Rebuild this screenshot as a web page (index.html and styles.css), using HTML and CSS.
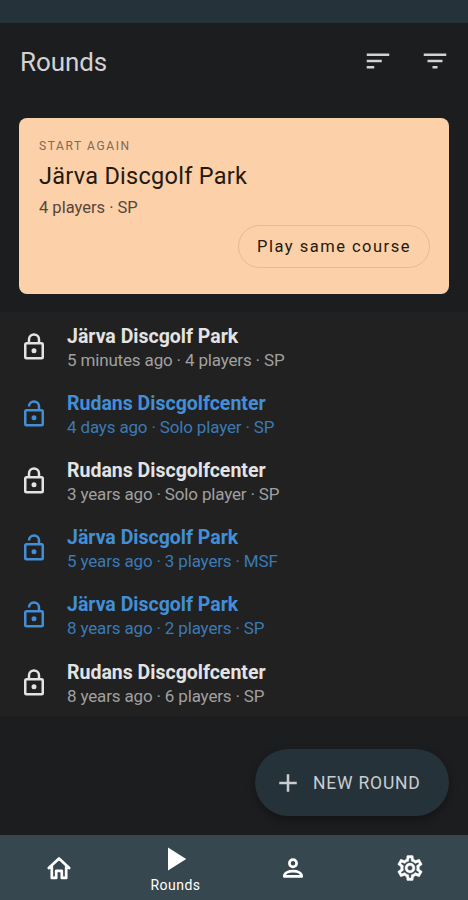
FILE: index.html
```html
<!DOCTYPE html>
<html lang="en">
<head>
<meta charset="utf-8">
<title>Rounds</title>
<link rel="stylesheet" href="styles.css">
</head>
<body>
<svg class="defs" aria-hidden="true">
  <symbol id="locked" viewBox="0 0 24 24"><path d="M12 17a2 2 0 1 1 0-4 2 2 0 0 1 0 4m6 3V10H6v10h12m0-12a2 2 0 0 1 2 2v10a2 2 0 0 1-2 2H6a2 2 0 0 1-2-2V10c0-1.1.9-2 2-2h1V6a5 5 0 0 1 10 0v2h1m-6-5a3 3 0 0 0-3 3v2h6V6a3 3 0 0 0-3-3z"/></symbol>
  <symbol id="unlocked" viewBox="0 0 24 24"><path d="M12 17a2 2 0 1 1 0-4 2 2 0 0 1 0 4m6 3V10H6v10h12m0-12a2 2 0 0 1 2 2v10a2 2 0 0 1-2 2H6a2 2 0 0 1-2-2V10c0-1.1.9-2 2-2h9V6a3 3 0 0 0-6 0H7a5 5 0 0 1 10 0v2h1z"/></symbol>
</svg>
<div class="status"></div>
<header class="top">
  <h1>Rounds</h1>
  <svg class="icon" viewBox="0 0 24 24"><path d="M3 18h6v-2H3v2zM3 6v2h18V6H3zm0 7h12v-2H3v2z"/></svg>
  <svg class="icon" viewBox="0 0 24 24"><path d="M10 18h4v-2h-4v2zM3 6v2h18V6H3zm3 7h12v-2H6v2z"/></svg>
</header>
<section class="card">
  <div class="overline">START AGAIN</div>
  <h2>Järva Discgolf Park</h2>
  <p>4 players · SP</p>
  <button class="again">Play same course</button>
</section>
<ul class="rounds">
  <li><svg class="icon"><use href="#locked"/></svg><div><b>Järva Discgolf Park</b><span>5 minutes ago · 4 players · SP</span></div></li>
  <li class="open"><svg class="icon"><use href="#unlocked"/></svg><div><b>Rudans Discgolfcenter</b><span>4 days ago · Solo player · SP</span></div></li>
  <li><svg class="icon"><use href="#locked"/></svg><div><b>Rudans Discgolfcenter</b><span>3 years ago · Solo player · SP</span></div></li>
  <li class="open"><svg class="icon"><use href="#unlocked"/></svg><div><b>Järva Discgolf Park</b><span>5 years ago · 3 players · MSF</span></div></li>
  <li class="open"><svg class="icon"><use href="#unlocked"/></svg><div><b>Järva Discgolf Park</b><span>8 years ago · 2 players · SP</span></div></li>
  <li><svg class="icon"><use href="#locked"/></svg><div><b>Rudans Discgolfcenter</b><span>8 years ago · 6 players · SP</span></div></li>
</ul>
<div class="actions">
  <button class="new"><svg class="icon" viewBox="0 0 24 24"><path d="M19 13h-6v6h-2v-6H5v-2h6V5h2v6h6v2z"/></svg><span>NEW ROUND</span></button>
</div>
<nav class="tabs">
  <a><svg class="tab-icon" viewBox="0 0 28 28"><path class="line" d="M3.8 14 14 4.4 24.2 14M6.8 12.5v11.4h4.4v-7h5.6v7h4.4V12.5"/></svg></a>
  <a class="current"><svg class="tab-icon" viewBox="0 0 28 28"><path d="M6 2.5v23L24.2 14z"/></svg><span>Rounds</span></a>
  <a><svg class="tab-icon" viewBox="0 0 28 28"><circle class="line" cx="14" cy="9.2" r="3.6"/><path class="line" d="M5.3 22.4c0-7 17.4-7 17.4 0z"/></svg></a>
  <a><svg class="icon gear" viewBox="0 0 24 24"><path d="M12 8a4 4 0 1 1 0 8 4 4 0 0 1 0-8m0 2a2 2 0 1 0 0 4 2 2 0 0 0 0-4m-2 12c-.25 0-.46-.18-.5-.42l-.37-2.65c-.63-.25-1.17-.59-1.69-.99l-2.49 1.01c-.22.08-.49 0-.61-.22l-2-3.46a.493.493 0 0 1 .12-.64l2.11-1.66L4.5 12l.07-1-2.11-1.63a.493.493 0 0 1-.12-.64l2-3.46c.12-.22.39-.31.61-.22l2.49 1c.52-.39 1.06-.73 1.69-.98l.37-2.65c.04-.24.25-.42.5-.42h4c.25 0 .46.18.5.42l.37 2.65c.63.25 1.17.59 1.69.98l2.49-1c.22-.09.49 0 .61.22l2 3.46c.13.22.07.49-.12.64L19.43 11l.07 1-.07 1 2.11 1.63c.19.15.25.42.12.64l-2 3.46c-.12.22-.39.31-.61.22l-2.49-1c-.52.39-1.06.73-1.69.98l-.37 2.65c-.04.24-.25.42-.5.42h-4m1.25-18-.37 2.61c-1.2.25-2.26.89-3.03 1.78L5.44 7.35l-.75 1.3L6.8 10.2a5.55 5.55 0 0 0 0 3.6l-2.12 1.56.75 1.3 2.43-1.04c.77.88 1.82 1.52 3.01 1.76l.37 2.62h1.52l.37-2.61c1.19-.25 2.24-.89 3.01-1.77l2.43 1.04.75-1.3-2.12-1.55c.4-1.17.4-2.44 0-3.61l2.11-1.55-.75-1.3-2.41 1.04a5.42 5.42 0 0 0-3.03-1.77L12.75 4h-1.5z"/></svg></a>
</nav>
</body>
</html>
```

FILE: styles.css
```css
* { box-sizing: border-box; }
body {
  margin: 0;
  height: 900px;
  display: flex;
  flex-direction: column;
  background: #1c1d1f;
  color: #e3e3e3;
  font-family: Roboto, sans-serif;
  overflow: hidden;
}
h1, h2, p, ul { margin: 0; padding: 0; font-weight: 400; }
button { font: inherit; color: inherit; border: 0; }
.defs { display: none; }
.icon { width: 30px; height: 30px; flex: none; fill: currentColor; }
.status { height: 23px; background: #263239; }
.top {
  height: 77px;
  display: flex;
  align-items: center;
  gap: 27px;
  padding: 0 18.5px 0 20px;
  color: #d2d2d2;
}
.top .icon { margin-top: -2px; }
.top h1 { flex: 1; font-size: 26px; line-height: 32px; letter-spacing: -.1px; }
.card {
  margin: 18px 19px 0;
  height: 176px;
  border-radius: 8px;
  padding: 20px 19px 0 20px;
  background: #fcd0a8;
  color: #24190f;
  display: flex;
  flex-direction: column;
}
.overline { font-size: 12px; line-height: 16px; letter-spacing: 1.6px; color: #806955; }
.card h2 { font-size: 23.5px; line-height: 30px; margin-top: 7px; letter-spacing: .28px; }
.card p { font-size: 16.5px; line-height: 20px; margin-top: 7px; color: #56463a; }
.again {
  align-self: flex-end;
  width: 192px;
  height: 43px;
  margin-top: 7px;
  padding: 0;
  border: 1px solid #e5bb96;
  border-radius: 22px;
  background: none;
  font-size: 16.5px;
  letter-spacing: 1.5px;
}
.rounds { list-style: none; margin-top: 18px; height: 404px; padding-top: 1px; background: #212121; }
.rounds li { height: 67.2px; display: flex; align-items: center; gap: 18px; padding-left: 19px; }
.rounds div { padding-top: 3px; }
.rounds b { display: block; font-size: 19.5px; line-height: 24px; font-weight: 700; }
.rounds span { display: block; font-size: 17px; line-height: 23px; letter-spacing: -.16px; color: #a0a0a0; }
.rounds .open, .rounds .open b { color: #428fd7; }
.rounds .open span { color: #3b7ab5; }
.actions { height: 119px; padding: 33px 19px 0; display: flex; justify-content: flex-end; }
.new {
  width: 194px;
  height: 67px;
  padding: 0 0 0 18px;
  border-radius: 34px;
  background: #263239;
  color: #c9cdd0;
  display: flex;
  align-items: center;
  gap: 10px;
  font-size: 17.5px;
  letter-spacing: .8px;
  box-shadow: 0 4px 8px rgba(0, 0, 0, .3);
}
.tabs { flex: 1; display: grid; grid-template-columns: repeat(4, 1fr); background: #37474f; color: #fff; }
.tabs a { display: flex; flex-direction: column; align-items: center; justify-content: center; padding-top: 1px; }
.tabs .current { padding-top: 3px; }
.tab-icon { width: 28px; height: 28px; fill: currentColor; }
.line { fill: none; stroke: currentColor; stroke-width: 2.7; stroke-linejoin: round; stroke-linecap: round; }
.gear { stroke: currentColor; stroke-width: .3; }
.tabs span { font-size: 14px; line-height: 18px; letter-spacing: .5px; margin-top: 3px; }
```
